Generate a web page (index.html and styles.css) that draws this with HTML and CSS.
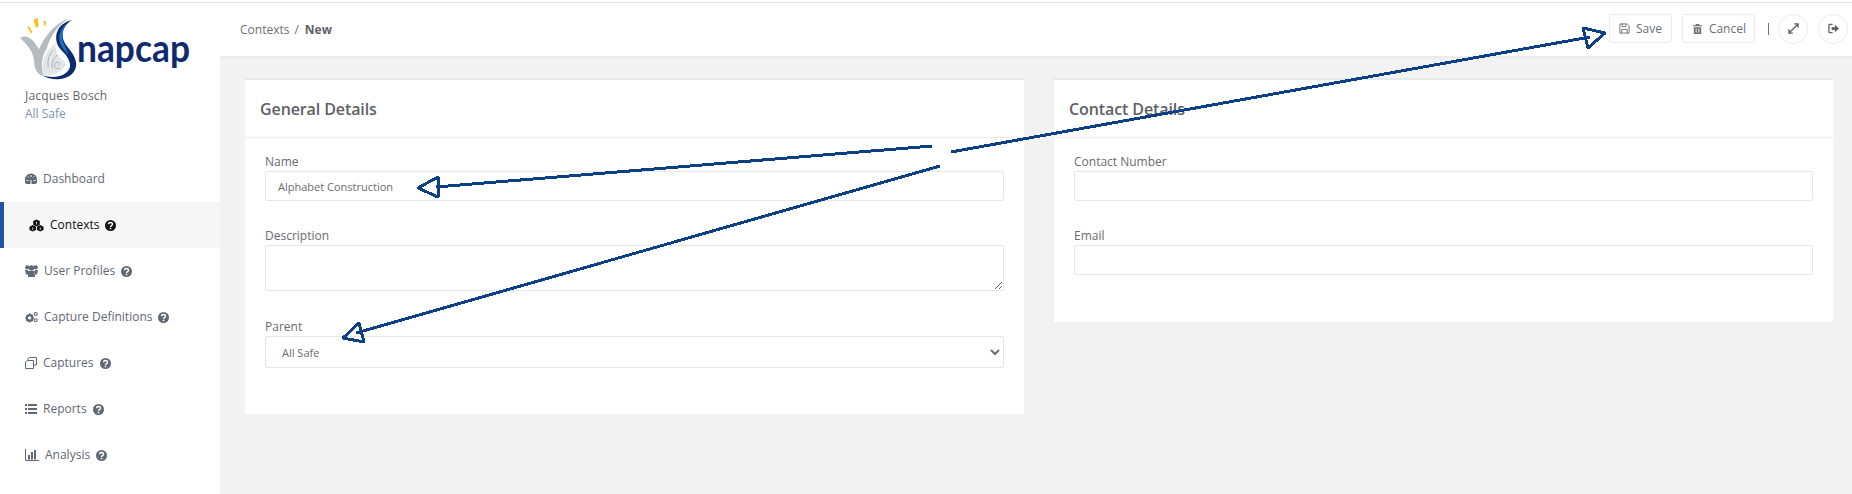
FILE: index.html
```html
<!DOCTYPE html>
<html lang="en">
<head>
<meta charset="utf-8">
<title>Contexts / New</title>
<link rel="stylesheet" href="styles.css">
</head>
<body>
<svg class="icon-sprite" width="0" height="0" aria-hidden="true">
  <symbol id="q" viewBox="0 0 12 12"><circle cx="6" cy="6" r="6" fill="currentColor"/><path d="M3.900 4.700c0-2.600 4.300-2.600 4.300 0 0 1.500-2.200 1.400-2.200 3" fill="none" stroke="#fff" stroke-width="1.500"/><rect x="5.100" y="8.500" width="1.800" height="1.600" fill="#fff"/></symbol>
</svg>
<div class="topline"></div>
<div class="app">
  <aside class="sidebar">
    <div class="logo">
      <svg width="200" height="70" viewBox="0 0 200 70">
        <g transform="translate(-3 -2) scale(.3333)">
          <path d="M37 45L48 65L52 60L42 42Z" fill="#f5c21b"/>
          <path d="M55 22L63 47L71 43L68 18Z" fill="#f5c21b"/>
          <path d="M85 28L88 42L92 40L93 26Z" fill="#f5c21b"/>
          <path d="M15 78C25 70 40 72 52 85C60 92 68 105 72 112C85 80 115 35 165 18C130 35 105 75 95 110C85 125 75 150 85 190C70 190 60 175 58 155C57 125 45 105 15 78Z" fill="#b4bcbf"/>
          <path d="M85 190C75 150 90 120 122 92C120 120 130 135 150 150C155 170 130 190 85 190Z" fill="#e3e6e7"/>
          <path d="M100 165C95 140 105 125 115 115M112 170C108 150 118 135 128 130M135 168C122 175 113 160 122 152C130 146 138 155 130 160" fill="none" stroke="#a7b0b4" stroke-width="3"/>
          <path d="M172 24C140 30 118 55 125 90C130 115 160 125 165 155C170 185 125 205 82 190C120 215 190 200 183 150C178 115 140 100 143 65C145 45 158 30 172 24Z" fill="#0f2a6e"/>
          <path d="M165 28C145 40 130 60 133 85C136 105 150 115 160 130C158 110 140 95 142 70C143 50 155 35 165 28Z" fill="#1a6fc0"/>
        </g>
        <text class="wordmark" x="59" y="48" textLength="113" lengthAdjust="spacingAndGlyphs">napcap</text>
      </svg>
    </div>
    <div class="user">
      <div class="user-name">Jacques Bosch</div>
      <div class="user-org">All Safe</div>
    </div>
    <nav class="nav">
      <a class="nav-item">
        <svg class="ni" viewBox="0 0 12 12"><path d="M6 0.500A6 6 0 0 0 0 6.500v2.500c0 1.200.8 2 2 2h8c1.200 0 2-.8 2-2V6.500A6 6 0 0 0 6 0.500z" fill="currentColor"/><path d="M6 2v2M2.800 3.500l1 1M9.200 3.500l-1 1M1.500 7.500h2M8.500 7.500h2M6 11V7" stroke="#fff" stroke-width="1"/></svg>
        <span>Dashboard</span>
      </a>
      <a class="nav-item active">
        <svg class="ni ni-wide" viewBox="0 0 16 13"><path d="M8 0l3.500 1.800v3.800L8 7.500 4.500 5.600V1.800z" fill="currentColor"/><path d="M4 6l3.500 1.800v3.400L4 13 .5 11.200V7.800zM12 6l3.500 1.800v3.400L12 13l-3.500-1.800V7.800z" fill="currentColor"/><path d="M4 8.500v3M12 8.500v3M8 2.500v3" stroke="#fff" stroke-width=".8"/></svg>
        <span>Contexts</span>
        <svg class="q"><use href="#q"/></svg>
      </a>
      <a class="nav-item">
        <svg class="ni ni-m" viewBox="0 0 13 12"><circle cx="2.300" cy="2.300" r="2.100" fill="currentColor"/><circle cx="10.700" cy="2.300" r="2.100" fill="currentColor"/><circle cx="6.500" cy="3" r="2.700" fill="currentColor"/><path d="M0 5h3l.5 4.500H1zM13 5h-3l-.5 4.500H12zM3 6h7v6H3z" fill="currentColor"/></svg>
        <span>User Profiles</span>
        <svg class="q"><use href="#q"/></svg>
      </a>
      <a class="nav-item">
        <svg class="ni ni-m" viewBox="0 0 14 12"><circle cx="5" cy="7" r="3" fill="none" stroke="currentColor" stroke-width="2.400"/><path d="M5 2v1.500M5 10.500V12M.5 7H2M8 7h1.500M1.800 3.800l1 1M8.200 3.800l-1 1M1.800 10.200l1-1M8.200 10.200l-1-1" stroke="currentColor" stroke-width="1.500"/><circle cx="11.500" cy="2.800" r="1.600" fill="none" stroke="currentColor" stroke-width="1.200"/><circle cx="11.500" cy="9.500" r="1.600" fill="none" stroke="currentColor" stroke-width="1.200"/></svg>
        <span>Capture Definitions</span>
        <svg class="q"><use href="#q"/></svg>
      </a>
      <a class="nav-item">
        <svg class="ni" viewBox="0 0 12 12"><path d="M3 3.500V1.500L4.500 .5h7v7.500H8.500M.5 5L2.500 3.500H8.500v8H.5z" fill="none" stroke="currentColor" stroke-width="1"/></svg>
        <span>Captures</span>
        <svg class="q"><use href="#q"/></svg>
      </a>
      <a class="nav-item">
        <svg class="ni" viewBox="0 0 12 10"><path d="M0 0h2v2H0zM3 0h9v2H3zM0 4h2v2H0zM3 4h9v2H3zM0 8h2v2H0zM3 8h9v2H3z" fill="currentColor"/></svg>
        <span>Reports</span>
        <svg class="q"><use href="#q"/></svg>
      </a>
      <a class="nav-item">
        <svg class="ni ni-l" viewBox="0 0 14 12"><path d="M.5 0v11.500H14" fill="none" stroke="currentColor"/><path d="M3 6h2v4.500H3zM6 3h2v7.500H6zM9 1h2v9.500H9z" fill="currentColor"/></svg>
        <span>Analysis</span>
        <svg class="q"><use href="#q"/></svg>
      </a>
    </nav>
  </aside>
  <div class="content">
    <header class="topbar">
      <div class="crumbs"><span>Contexts</span><span class="sep">/</span><b>New</b></div>
      <div class="actions">
        <button class="btn">
          <svg class="bi" viewBox="0 0 12 12"><path d="M1 1h8l2 2v8H1z M3.500 1v3h4V1M3 11V7h6v4" fill="none" stroke="currentColor" stroke-width="1"/></svg>Save
        </button>
        <button class="btn btn-cancel">
          <svg class="bi" viewBox="0 0 12 12"><path d="M1 2.500h10v1H1zM4 1h4v1.500H4zM2 4.500h8V12H2z" fill="currentColor"/><path d="M4.500 6v4.500M7.500 6v4.500" stroke="#fff"/></svg>Cancel
        </button>
        <span class="vr"></span>
        <button class="round">
          <svg class="ri" viewBox="0 0 12 12"><path d="M1 11l10-10M6.800 1H11v4.200M1 6.800V11h4.200" fill="none" stroke="currentColor" stroke-width="1.500"/></svg>
        </button>
        <button class="round">
          <svg class="ri" viewBox="0 0 12 12"><path d="M5 1.500H2a1 1 0 0 0-1 1v7a1 1 0 0 0 1 1h3" fill="none" stroke="currentColor" stroke-width="1.400"/><path d="M4 4.500h3.500V2L12 6l-4.500 4V7.500H4z" fill="currentColor"/></svg>
        </button>
      </div>
    </header>
    <main class="main">
      <section class="card">
        <h2 class="card-title">General Details</h2>
        <div class="card-body">
          <label class="field">
            <span class="lbl">Name</span>
            <input class="ctl" type="text" value="Alphabet Construction">
          </label>
          <label class="field">
            <span class="lbl">Description</span>
            <textarea class="ctl area"></textarea>
          </label>
          <label class="field field-parent">
            <span class="lbl">Parent</span>
            <select class="ctl sel"><option>All Safe</option></select>
          </label>
        </div>
      </section>
      <section class="card card-short">
        <h2 class="card-title">Contact Details</h2>
        <div class="card-body">
          <label class="field">
            <span class="lbl">Contact Number</span>
            <input class="ctl" type="text">
          </label>
          <label class="field">
            <span class="lbl">Email</span>
            <input class="ctl" type="text">
          </label>
        </div>
      </section>
    </main>
  </div>
</div>
<svg class="arrows" width="1852" height="494" viewBox="0 0 1852 494" aria-hidden="true">
  <g>
    <path d="M951 152L1590 37M1605 33L1583 28L1588 48Z"/>
    <path d="M932 146L436 187M418 188L438 177L438 197Z"/>
    <path d="M940 166L356 333M343 338L359 323L364 342Z"/>
  </g>
</svg>
</body>
</html>
```
FILE: styles.css
```css
* { box-sizing: border-box; }
html, body { margin: 0; height: 100%; }
body {
  position: relative;
  width: 1852px;
  height: 494px;
  overflow: hidden;
  background: #f2f2f2;
  color: #686a6f;
  font: 12px/16px "Open Sans", "Noto Sans", sans-serif;
}
.icon-sprite { position: absolute; }
.topline { height: 3px; background: #fff; border-bottom: 1px solid #e0e1e2; }
.app { display: flex; height: 491px; }
.sidebar { width: 220px; flex: none; background: #fff; }
.logo { padding: 11px 0 0 18px; height: 84px; }
.logo svg { display: block; }
.wordmark { font: 700 38px "Lato", sans-serif; fill: #0f2a6e; }
.user { padding-left: 25px; font-size: 12px; line-height: 18px; }
.user-name { color: #64666b; letter-spacing: .2px; }
.user-org { color: #7e93ad; }
.nav { margin-top: 33px; display: flex; flex-direction: column; }
.nav-item {
  height: 46px;
  padding-left: 25px;
  display: flex;
  align-items: center;
  gap: 6px;
  color: #5f6873;
}
.nav-item.active {
  background: #f6f6f6;
  border-left: 4px solid #2350a8;
  padding-left: 25px;
  color: #111;
}
.ni { width: 12px; height: 12px; flex: none; }
.ni-m { width: 13px; }
.ni-l { width: 14px; }
.ni-wide { width: 15px; height: 13px; }
.q { width: 11px; height: 11px; flex: none; }
.content { flex: 1; min-width: 0; display: flex; flex-direction: column; }
.topbar {
  height: 55px;
  flex: none;
  background: #fff;
  border-bottom: 2px solid #ebebeb;
  display: flex;
  align-items: center;
  justify-content: space-between;
  padding: 0 4px 2px 20px;
}
.crumbs { display: flex; gap: 5px; margin-top: 2px; color: #6d6f74; }
.crumbs .sep { margin-right: 1px; }
.crumbs b { color: #5f6166; font-weight: 700; }
.actions { display: flex; align-items: center; }
.btn {
  height: 29px;
  padding: 0 9px;
  margin-right: 10px;
  display: flex;
  align-items: center;
  gap: 6px;
  background: #fff;
  border: 1px solid #ebebeb;
  border-radius: 3px;
  color: #6d6f74;
  font: 12px "Open Sans", sans-serif;
}
.btn-cancel { padding-right: 8px; }
.bi { width: 11px; height: 11px; }
.vr { width: 1px; height: 12px; background: #6d7480; margin: 0 9px 0 3px; }
.round {
  width: 30px;
  height: 30px;
  margin-right: 10px;
  padding: 0;
  display: flex;
  align-items: center;
  justify-content: center;
  background: #fff;
  border: 1px solid #ebebeb;
  border-radius: 50%;
  color: #5f6166;
}
.round:last-child { margin-right: 0; }
.ri { width: 11px; height: 11px; }
.main {
  flex: 1;
  display: flex;
  align-items: flex-start;
  gap: 30px;
  padding: 20px 19px 0 25px;
}
.card {
  flex: 1;
  height: 336px;
  background: #fff;
  border-top: 2px solid #e4e9ee;
}
.card-short { height: 244px; }
.card-title {
  margin: 0;
  height: 58px;
  padding-left: 15px;
  display: flex;
  align-items: center;
  font-size: 16px;
  font-weight: 600;
  letter-spacing: -.1px;
  color: #5e6065;
  border-bottom: 1px solid #ebebeb;
}
.card-body { padding: 14px 20px 0; display: flex; flex-direction: column; gap: 25px; }
.field { display: block; }
.field-parent { margin-top: 1px; }
.lbl { display: block; height: 19px; line-height: 19px; color: #6a6c70; }
.ctl {
  display: block;
  width: 100%;
  height: 30px;
  padding: 0 12px;
  background: #fff;
  border: 1px solid #e6e6e6;
  border-radius: 2px;
  color: #6a6c70;
  font: 11px "Open Sans", sans-serif;
  outline: 0;
}
.area { height: 46px; resize: vertical; }
.sel { height: 32px; padding-left: 12px; }
.arrows { position: absolute; left: 0; top: 0; pointer-events: none; }
.arrows g { fill: none; stroke: #0b3f86; stroke-width: 3; stroke-linejoin: round; shape-rendering: crispEdges; }
```
